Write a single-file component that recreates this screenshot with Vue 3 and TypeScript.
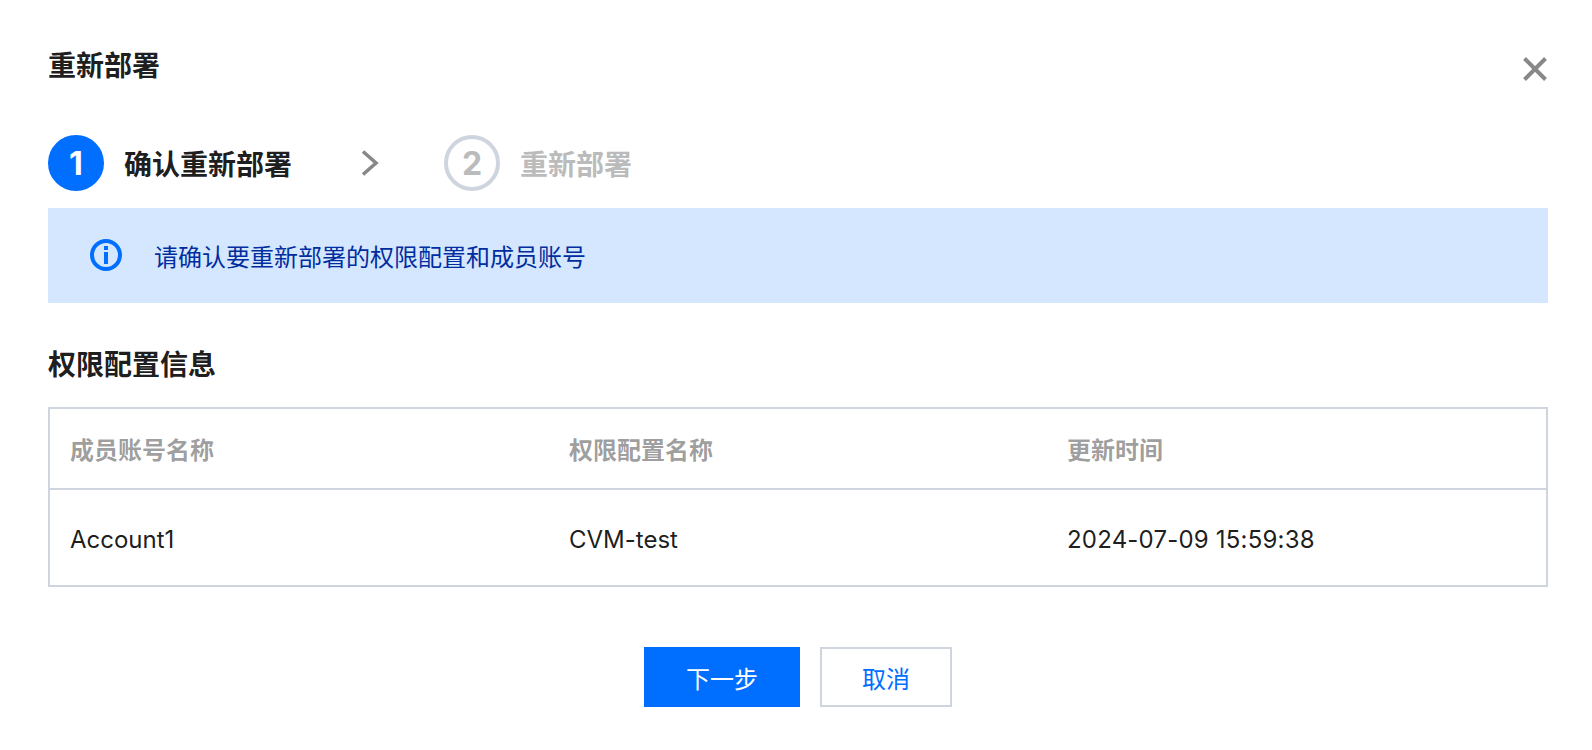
<script setup lang="ts">
const columns = ['成员账号名称', '权限配置名称', '更新时间']
const rows = [['Account1', 'CVM-test', '2024-07-09 15:59:38']]
</script>

<template>
  <div class="dialog">
    <header class="dialog__head">
      <h2 class="dialog__title">重新部署</h2>
      <svg class="dialog__close" width="26" height="26" viewBox="0 0 26 26" fill="none">
        <path d="M2.5 2.5 23.5 23.5M23.5 2.5 2.5 23.5" stroke="#888888" stroke-width="4" />
      </svg>
    </header>

    <div class="steps">
      <div class="step step--current">
        <span class="step__num">1</span>
        <span class="step__label">确认重新部署</span>
      </div>
      <svg class="steps__arrow" width="18" height="26" viewBox="0 0 18 26" fill="none">
        <path d="M2 1.5 15 13 2 24.5" stroke="#888888" stroke-width="3.6" />
      </svg>
      <div class="step">
        <span class="step__num">2</span>
        <span class="step__label">重新部署</span>
      </div>
    </div>

    <div class="alert">
      <svg class="alert__icon" width="32" height="32" viewBox="0 0 32 32" fill="none">
        <circle cx="16" cy="16" r="14" stroke="#006eff" stroke-width="4" />
        <rect x="14" y="7" width="4" height="4" fill="#006eff" />
        <rect x="14" y="13" width="4" height="12" fill="#006eff" />
      </svg>
      <span>请确认要重新部署的权限配置和成员账号</span>
    </div>

    <h3 class="section-title">权限配置信息</h3>

    <div class="table">
      <div class="table__row table__row--head">
        <div v-for="col in columns" :key="col" class="table__cell">{{ col }}</div>
      </div>
      <div v-for="row in rows" :key="row[0]" class="table__row table__row--body">
        <div v-for="cell in row" :key="cell" class="table__cell">{{ cell }}</div>
      </div>
    </div>

    <footer class="dialog__foot">
      <button class="btn btn--primary">下一步</button>
      <button class="btn">取消</button>
    </footer>
  </div>
</template>

<style>
body {
  background: #fff;
}
</style>

<style scoped>
.dialog {
  box-sizing: border-box;
  width: 1592px;
  height: 750px;
  padding: 44px 44px 0 48px;
  background: #fff;
  font-family: Inter, "Noto Sans CJK SC", sans-serif;
  font-size: 24px;
  color: #000000e6;
}

.dialog__head {
  display: flex;
  align-items: center;
  justify-content: space-between;
  height: 44px;
}

.dialog__title {
  margin: 0;
  font-size: 28px;
  font-weight: 600;
  line-height: 44px;
}

.dialog__close {
  margin-top: 6px;
}

.steps {
  display: flex;
  align-items: center;
  height: 56px;
  margin-top: 47px;
}

.step {
  display: flex;
  align-items: center;
  gap: 20px;
  font-size: 28px;
  font-weight: 600;
  color: #bbbbbb;
}

.step__num {
  box-sizing: border-box;
  display: flex;
  align-items: center;
  justify-content: center;
  width: 56px;
  height: 56px;
  border: 4px solid #cfd5de;
  border-radius: 50%;
  font-size: 32px;
  font-weight: 700;
}

.step--current {
  color: #000000e6;
}

.step--current .step__num {
  background: #006eff;
  border-color: #006eff;
  color: #fff;
}

.steps__arrow {
  margin: 0 65px 0 69px;
}

.alert {
  box-sizing: border-box;
  display: flex;
  align-items: center;
  gap: 32px;
  height: 95px;
  margin-top: 17px;
  padding-left: 42px;
  padding-bottom: 1px;
  background: #d5e7ff;
  color: #002da0;
}

.alert__icon {
  flex: none;
}

.section-title {
  margin: 44px 0 0;
  font-size: 28px;
  font-weight: 600;
  line-height: 36px;
}

.table {
  margin-top: 24px;
  border: 2px solid #cfd5de;
}

.table__row {
  display: grid;
  grid-template-columns: 499px 498px 1fr;
  align-items: center;
  padding-left: 20px;
}

.table__row--head {
  height: 79px;
  border-bottom: 2px solid #cfd5de;
  font-weight: 600;
  color: #00000066;
}

.table__row--body {
  box-sizing: border-box;
  height: 95px;
  padding-top: 3px;
}

.table__row--body .table__cell:nth-child(3) {
  letter-spacing: 0.2px;
}

.dialog__foot {
  display: flex;
  justify-content: center;
  gap: 20px;
  margin-top: 60px;
}

.btn {
  box-sizing: border-box;
  width: 132px;
  height: 60px;
  padding: 0;
  border: 2px solid #cfd5de;
  border-radius: 0;
  background: #fff;
  font: inherit;
  color: #006eff;
}

.btn--primary {
  width: 156px;
  border-color: #006eff;
  background: #006eff;
  color: #fff;
}
</style>
